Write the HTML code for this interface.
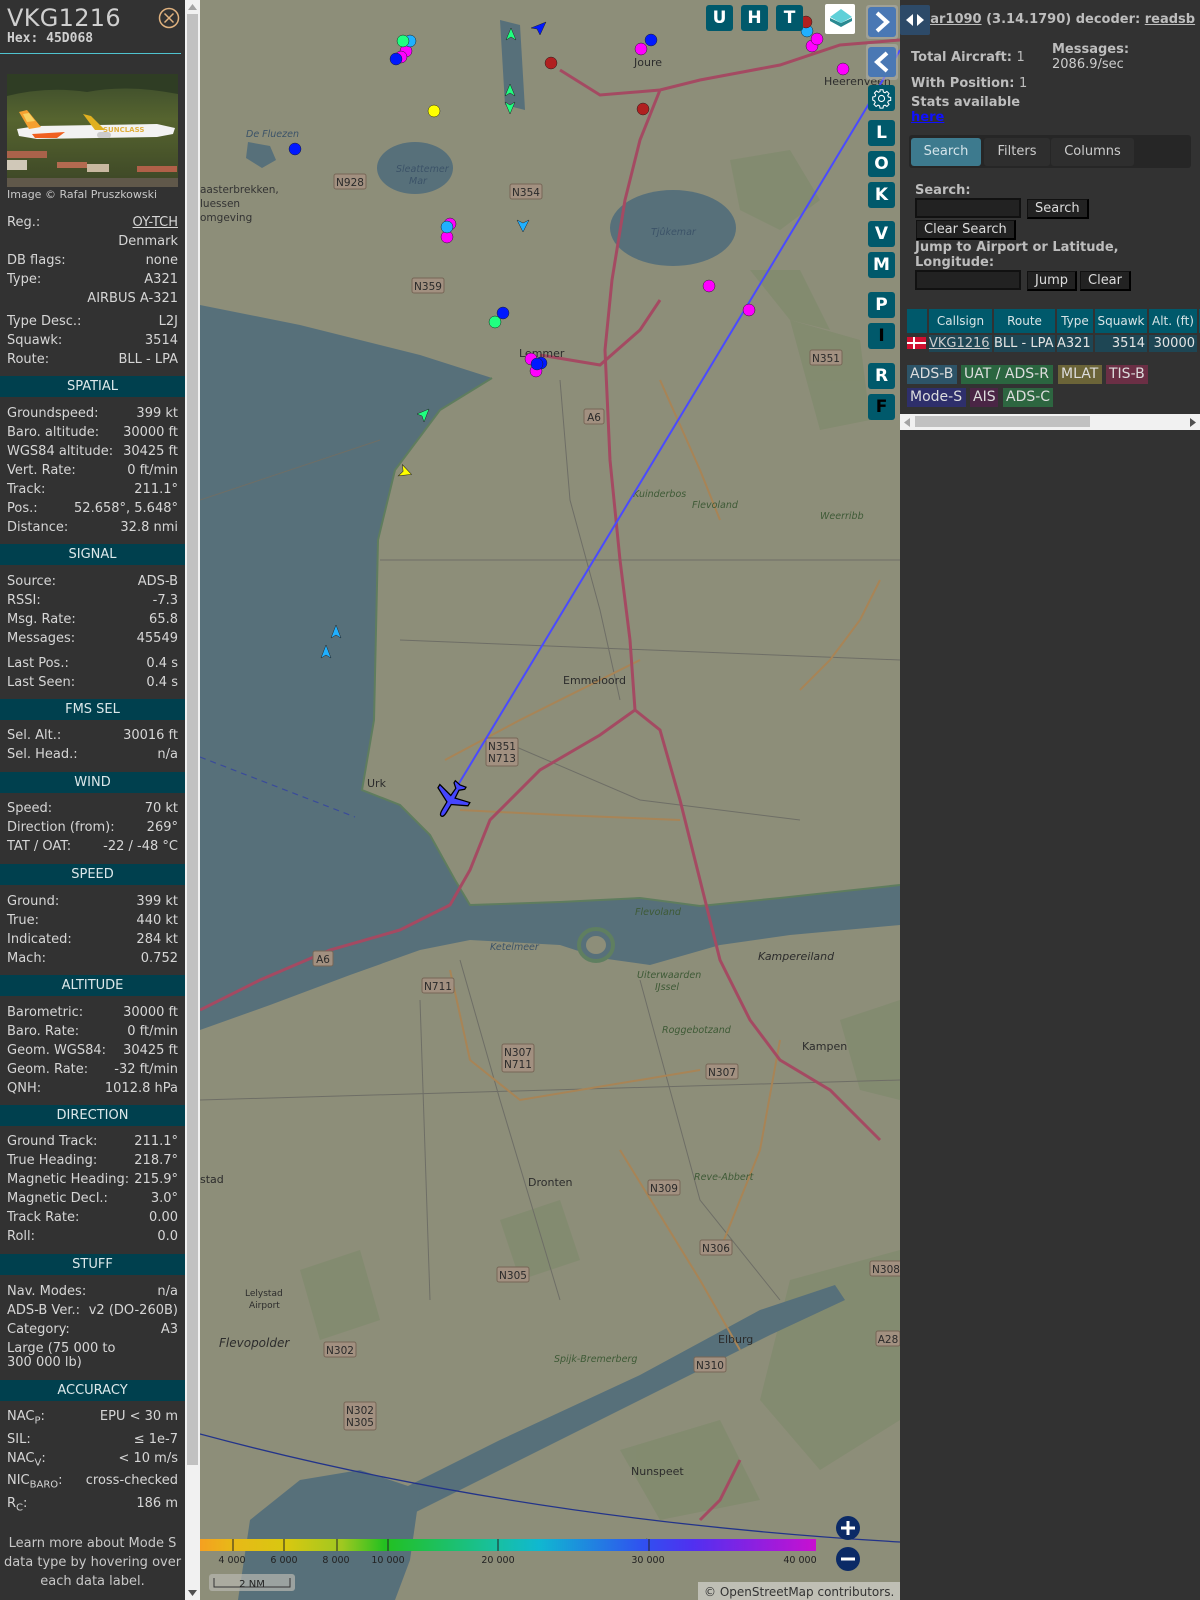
<!DOCTYPE html>
<html><head><meta charset="utf-8"><style>
*{margin:0;padding:0;box-sizing:border-box}
body{width:1200px;height:1600px;overflow:hidden;background:#323232;font-family:"DejaVu Sans","Liberation Sans",sans-serif;color:#d8d8d8;position:relative}
.side{position:absolute;left:0;top:0;width:185px;height:1600px;background:#323232}
.r{position:absolute;left:7px;width:171px;display:flex;justify-content:space-between;font-size:13px;line-height:16px;white-space:nowrap;color:#d6d6d6}
.h{position:absolute;left:0;width:185px;height:21px;background:#00404e;font-size:13px;line-height:21px;text-align:center;color:#dde8ea}
.sb{position:absolute;left:185px;top:0;width:15px;height:1600px;background:#f1f1f1}
.map{position:absolute;left:200px;top:0;width:700px;height:1600px;overflow:hidden}
.btn{position:absolute;width:27px;height:26px;background:#00596b;border-radius:3px;color:#fff;font:bold 17px "DejaVu Sans",sans-serif;text-align:center;line-height:26px}
.panel{position:absolute;left:900px;top:0;width:300px;height:1600px;background:#323232;font-size:13px}
.b{font-weight:bold;color:#bdbdbd}
.pbtn{position:absolute;background:#222;border:1px solid #111;border-bottom:2px solid #000;border-right:2px solid #000;color:#ddd;font-size:13px;line-height:17px;padding:0 7px}
.inp{position:absolute;background:#222;border:2px solid #111;width:106px;height:20px}
.th{position:absolute;top:309px;height:24px;background:#00596b;color:#d8e4e6;font-size:12px;line-height:24px;text-align:center;white-space:nowrap}
.td{position:absolute;top:335px;height:17px;background:#1e4654;color:#e4e4e4;font-size:13px;line-height:17px;white-space:nowrap}
.bd{position:absolute;height:19px;font-size:14px;line-height:19px;padding:0 3px;color:#ddd;white-space:nowrap}
</style></head><body>

<div class="side">
 <div style="position:absolute;left:7px;top:4px;font-size:24px;color:#cfcfcf;letter-spacing:.3px">VKG1216</div>
 <svg style="position:absolute;left:158px;top:7px" width="22" height="22"><circle cx="11" cy="11" r="9.5" fill="none" stroke="#e0b27f" stroke-width="1.5"/><path d="M6.5 6.5L15.5 15.5M15.5 6.5L6.5 15.5" stroke="#e0b27f" stroke-width="1.5"/></svg>
 <div style="position:absolute;left:7px;top:31px;font:bold 13px 'DejaVu Sans Mono','Liberation Mono',monospace;color:#cfcfcf">Hex: 45D068</div>
 <div style="position:absolute;left:0;top:53px;width:181px;height:1px;background:#4fc3d0"></div>
 <svg style="position:absolute;left:7px;top:74px" width="171" height="113">
  <defs><linearGradient id="hill" x1="0" y1="0" x2="0" y2="1"><stop offset="0" stop-color="#3a4a2c"/><stop offset=".4" stop-color="#56642f"/><stop offset="1" stop-color="#3c4626"/></linearGradient></defs>
  <rect width="171" height="113" fill="url(#hill)"/>
  <path d="M0 0L171 0L171 20Q120 10 80 18Q40 12 0 22Z" fill="#2f3d24"/>
  <rect x="0" y="77" width="40" height="7" fill="#a9624a"/><rect x="50" y="88" width="30" height="6" fill="#b36a50"/><rect x="130" y="92" width="40" height="6" fill="#b06048"/><rect x="80" y="90" width="22" height="8" fill="#c8b8a0"/>
  <rect x="0" y="86" width="20" height="10" fill="#d0c8b8"/>
  <rect y="104" width="171" height="9" fill="#60584a"/>
  <path d="M10 55L30 52L150 50L168 54L166 60L150 63L30 65L12 62Z" fill="#f2f2f2"/>
  <path d="M12 38L20 36L34 53L22 55Z" fill="#f5a030"/><path d="M16 40L22 39L28 47L20 48Z" fill="#f8d060"/>
  <path d="M25 60L58 58L50 64L28 64Z" fill="#f06020"/>
  <path d="M76 40L84 42L98 56L88 56Z" fill="#e0b020"/>
  <rect x="90" y="58" width="14" height="6" rx="3" fill="#ccc"/>
  <text x="96" y="58" font-size="7" fill="#e0b040" font-weight="bold">SUNCLASS</text>
 </svg>
 <div style="position:absolute;left:7px;top:188px;font-size:11px;color:#c8c8c8">Image © Rafal Pruszkowski</div>

 <div class="r" style="top:215px"><span>Reg.:</span><span style="text-decoration:underline">OY-TCH</span></div>
 <div class="r" style="top:234px"><span></span><span>Denmark</span></div>
 <div class="r" style="top:253px"><span>DB flags:</span><span>none</span></div>
 <div class="r" style="top:272px"><span>Type:</span><span>A321</span></div>
 <div class="r" style="top:291px"><span></span><span>AIRBUS A-321</span></div>
 <div class="r" style="top:314px"><span>Type Desc.:</span><span>L2J</span></div>
 <div class="r" style="top:333px"><span>Squawk:</span><span>3514</span></div>
 <div class="r" style="top:352px"><span>Route:</span><span>BLL - LPA</span></div>

 <div class="h" style="top:376px">SPATIAL</div>
 <div class="r" style="top:406px"><span>Groundspeed:</span><span>399 kt</span></div>
 <div class="r" style="top:425px"><span>Baro. altitude:</span><span>30000 ft</span></div>
 <div class="r" style="top:444px"><span>WGS84 altitude:</span><span>30425 ft</span></div>
 <div class="r" style="top:463px"><span>Vert. Rate:</span><span>0 ft/min</span></div>
 <div class="r" style="top:482px"><span>Track:</span><span>211.1°</span></div>
 <div class="r" style="top:501px"><span>Pos.:</span><span>52.658°, 5.648°</span></div>
 <div class="r" style="top:520px"><span>Distance:</span><span>32.8 nmi</span></div>

 <div class="h" style="top:544px">SIGNAL</div>
 <div class="r" style="top:574px"><span>Source:</span><span>ADS-B</span></div>
 <div class="r" style="top:593px"><span>RSSI:</span><span>-7.3</span></div>
 <div class="r" style="top:612px"><span>Msg. Rate:</span><span>65.8</span></div>
 <div class="r" style="top:631px"><span>Messages:</span><span>45549</span></div>
 <div class="r" style="top:656px"><span>Last Pos.:</span><span>0.4 s</span></div>
 <div class="r" style="top:675px"><span>Last Seen:</span><span>0.4 s</span></div>

 <div class="h" style="top:699px">FMS SEL</div>
 <div class="r" style="top:728px"><span>Sel. Alt.:</span><span>30016 ft</span></div>
 <div class="r" style="top:747px"><span>Sel. Head.:</span><span>n/a</span></div>

 <div class="h" style="top:772px">WIND</div>
 <div class="r" style="top:801px"><span>Speed:</span><span>70 kt</span></div>
 <div class="r" style="top:820px"><span>Direction (from):</span><span>269°</span></div>
 <div class="r" style="top:839px"><span>TAT / OAT:</span><span>-22 / -48 °C</span></div>

 <div class="h" style="top:864px">SPEED</div>
 <div class="r" style="top:894px"><span>Ground:</span><span>399 kt</span></div>
 <div class="r" style="top:913px"><span>True:</span><span>440 kt</span></div>
 <div class="r" style="top:932px"><span>Indicated:</span><span>284 kt</span></div>
 <div class="r" style="top:951px"><span>Mach:</span><span>0.752</span></div>

 <div class="h" style="top:975px">ALTITUDE</div>
 <div class="r" style="top:1005px"><span>Barometric:</span><span>30000 ft</span></div>
 <div class="r" style="top:1024px"><span>Baro. Rate:</span><span>0 ft/min</span></div>
 <div class="r" style="top:1043px"><span>Geom. WGS84:</span><span>30425 ft</span></div>
 <div class="r" style="top:1062px"><span>Geom. Rate:</span><span>-32 ft/min</span></div>
 <div class="r" style="top:1081px"><span>QNH:</span><span>1012.8 hPa</span></div>

 <div class="h" style="top:1105px">DIRECTION</div>
 <div class="r" style="top:1134px"><span>Ground Track:</span><span>211.1°</span></div>
 <div class="r" style="top:1153px"><span>True Heading:</span><span>218.7°</span></div>
 <div class="r" style="top:1172px"><span>Magnetic Heading:</span><span>215.9°</span></div>
 <div class="r" style="top:1191px"><span>Magnetic Decl.:</span><span>3.0°</span></div>
 <div class="r" style="top:1210px"><span>Track Rate:</span><span>0.00</span></div>
 <div class="r" style="top:1229px"><span>Roll:</span><span>0.0</span></div>

 <div class="h" style="top:1254px">STUFF</div>
 <div class="r" style="top:1284px"><span>Nav. Modes:</span><span>n/a</span></div>
 <div class="r" style="top:1303px"><span>ADS-B Ver.:</span><span>v2 (DO-260B)</span></div>
 <div class="r" style="top:1322px"><span>Category:</span><span>A3</span></div>
 <div class="r" style="top:1341px"><span>Large (75 000 to</span><span></span></div>
 <div class="r" style="top:1355px"><span>300 000 lb)</span><span></span></div>

 <div class="h" style="top:1380px">ACCURACY</div>
 <div class="r" style="top:1409px"><span>NAC<sub style="font-size:10px">P</sub>:</span><span>EPU &lt; 30 m</span></div>
 <div class="r" style="top:1432px"><span>SIL:</span><span>≤ 1e-7</span></div>
 <div class="r" style="top:1451px"><span>NAC<sub style="font-size:10px">V</sub>:</span><span>&lt; 10 m/s</span></div>
 <div class="r" style="top:1473px"><span>NIC<sub style="font-size:10px">BARO</sub>:</span><span>cross-checked</span></div>
 <div class="r" style="top:1496px"><span>R<sub style="font-size:10px">C</sub>:</span><span>186 m</span></div>
 <div style="position:absolute;left:0;top:1534px;width:185px;text-align:center;font-size:13px;line-height:19px;color:#c8c8c8">Learn more about Mode S data type by hovering over each data label.</div>
</div>

<div class="sb">
 <div style="position:absolute;left:2px;top:14px;width:11px;height:1451px;background:#c1c1c1"></div>
 <svg style="position:absolute;left:3px;top:4px" width="9" height="6"><path d="M0 6L4.5 0L9 6Z" fill="#a3a3a3"/></svg>
 <svg style="position:absolute;left:3px;top:1590px" width="9" height="6"><path d="M0 0L4.5 6L9 0Z" fill="#505050"/></svg>
</div>

<div class="map">
<svg width="700" height="1600" viewBox="200 0 700 1600" style="position:absolute;left:0;top:0;font-family:'DejaVu Sans',sans-serif">
 <rect x="200" y="0" width="700" height="1600" fill="#8d8e79"/>
 <g fill="#7f8a6c" opacity=".7">
  <path d="M730 160L790 150L820 200L780 230L740 210Z"/><path d="M750 270L800 270L830 330L790 320Z"/>
  <path d="M790 320L860 340L870 420L820 430Z"/><path d="M790 1280L900 1250L900 1420L820 1470L760 1400Z"/>
  <path d="M500 1220L560 1200L580 1260L520 1280Z"/><path d="M300 1270L360 1250L380 1320L320 1340Z"/>
  <path d="M620 1450L720 1420L760 1500L660 1520Z"/><path d="M840 1020L900 1000L900 1100L860 1090Z"/>
 </g>
 <g fill="#57707a">
  <path d="M200 305L300 325L420 355L492 378L440 410L395 470L378 540L374 720L362 790L400 805L430 835L455 880L470 905L560 902L640 898L700 906L780 898L900 885L900 925L790 935L720 945L650 965L600 958L560 945L470 940L420 950L350 975L270 1005L200 1030Z"/>
  <path d="M390 1495L500 1440L640 1375L760 1310L835 1285L845 1300L770 1335L650 1395L520 1460L410 1515Z"/>
  <path d="M238 1600L250 1520L300 1480L360 1470L420 1490L410 1560L395 1600Z"/>
  <ellipse cx="415" cy="168" rx="38" ry="26"/>
  <ellipse cx="673" cy="228" rx="63" ry="38"/>
  <path d="M248 142L270 146L276 160L262 168L246 158Z"/>
  <path d="M500 20L520 25L525 110L505 105Z"/>
  <ellipse cx="596" cy="945" rx="17" ry="16"/>
 </g>
 <ellipse cx="596" cy="945" rx="17" ry="16" fill="none" stroke="#5f7f60" stroke-width="4"/>
 <ellipse cx="596" cy="945" rx="10" ry="9" fill="#8d8e79"/>
 <path d="M492 378L440 410L395 470L378 540L374 720L362 790L400 805L430 835L455 880L470 905L560 902L640 898L700 906L780 898L900 885" fill="none" stroke="#5f7d5e" stroke-width="2"/>
 <g fill="none" stroke="#6e6e66" stroke-width="1">
  <path d="M560 380L570 500L600 610L620 700"/><path d="M380 560L620 560L900 560"/><path d="M400 640L900 660"/>
  <path d="M500 740L640 800L800 820"/><path d="M460 960L500 1100L560 1300"/><path d="M200 1100L900 1080"/>
  <path d="M640 980L700 1200L780 1300"/><path d="M420 1000L430 1300"/><path d="M200 500L380 440"/>
 </g>
 <g fill="none" stroke="#a88456" stroke-width="2">
  <path d="M445 760L520 720L600 680L640 660"/><path d="M460 810L560 815L680 820"/><path d="M660 380L700 470L720 520"/>
  <path d="M880 580L860 620L830 660L800 690"/><path d="M450 970L470 1060L520 1100L700 1070"/>
  <path d="M620 1150L700 1280L740 1350"/><path d="M780 1040L760 1150L720 1250"/>
 </g>
 <g fill="none" stroke="#a44a62" stroke-width="3">
  <path d="M560 70L600 95L660 90L700 80L780 65L840 45L900 40"/>
  <path d="M660 90L640 140L625 200L612 280L605 350L610 460L620 560L630 640L635 710L600 735L540 770L490 820L470 870L450 905L400 930L330 950L260 980L200 1010"/>
  <path d="M540 355L600 365L640 330L660 300"/>
  <path d="M635 710L660 730L680 800L700 880L720 960L750 1020L780 1060L830 1090L880 1140"/>
  <path d="M700 1520L720 1500L740 1460"/>
 </g>
 <path d="M200 1434Q520 1520 900 1542" fill="none" stroke="#22338a" stroke-width="1.3"/>
 <path d="M200 757L355 817" fill="none" stroke="#3a4b9a" stroke-width="1.2" stroke-dasharray="6 5"/>
 <g font-size="10.5" fill="#2a2a2a" text-anchor="middle">
  <g fill="#a29080" stroke="#776656" stroke-width="1">
   <rect x="334" y="174" width="32" height="15" rx="2"/><rect x="510" y="184" width="32" height="15" rx="2"/>
   <rect x="412" y="278" width="32" height="15" rx="2"/><rect x="810" y="350" width="32" height="15" rx="2"/>
   <rect x="584" y="409" width="20" height="15" rx="2"/><rect x="486" y="738" width="32" height="28" rx="2"/>
   <rect x="313" y="951" width="20" height="15" rx="2"/><rect x="422" y="978" width="32" height="15" rx="2"/>
   <rect x="502" y="1044" width="32" height="28" rx="2"/><rect x="706" y="1064" width="32" height="15" rx="2"/>
   <rect x="648" y="1180" width="32" height="15" rx="2"/><rect x="700" y="1240" width="32" height="15" rx="2"/>
   <rect x="497" y="1267" width="32" height="15" rx="2"/><rect x="870" y="1261" width="32" height="15" rx="2"/>
   <rect x="324" y="1342" width="32" height="15" rx="2"/><rect x="694" y="1357" width="32" height="15" rx="2"/>
   <rect x="344" y="1402" width="32" height="28" rx="2"/><rect x="876" y="1331" width="24" height="15" rx="2"/>
  </g>
  <text x="350" y="186">N928</text><text x="526" y="196">N354</text><text x="428" y="290">N359</text>
  <text x="826" y="362">N351</text><text x="594" y="421">A6</text><text x="502" y="750">N351</text><text x="502" y="762">N713</text>
  <text x="323" y="963">A6</text><text x="438" y="990">N711</text><text x="518" y="1056">N307</text><text x="518" y="1068">N711</text>
  <text x="722" y="1076">N307</text><text x="664" y="1192">N309</text><text x="716" y="1252">N306</text>
  <text x="513" y="1279">N305</text><text x="886" y="1273">N308</text><text x="340" y="1354">N302</text>
  <text x="710" y="1369">N310</text><text x="360" y="1414">N302</text><text x="360" y="1426">N305</text><text x="888" y="1343">A28</text>
 </g>
 <g font-size="11" fill="#2c2c2c">
  <text x="634" y="66">Joure</text><text x="824" y="85">Heerenveen</text><text x="519" y="357">Lemmer</text>
  <text x="563" y="684">Emmeloord</text><text x="367" y="787">Urk</text><text x="528" y="1186">Dronten</text>
  <text x="802" y="1050">Kampen</text><text x="718" y="1343">Elburg</text><text x="631" y="1475">Nunspeet</text>
  <text x="200" y="1183">stad</text><text x="219" y="1347" font-style="italic" font-size="12">Flevopolder</text>
  <text x="758" y="960" font-style="italic">Kampereiland</text>
  <text x="245" y="1296" font-size="9">Lelystad</text><text x="249" y="1308" font-size="9">Airport</text>
 </g>
 <g font-size="9.5" fill="#3c5368" font-style="italic">
  <text x="246" y="137">De Fluezen</text><text x="396" y="172">Sleattemer</text><text x="409" y="184">Mar</text>
  <text x="651" y="235">Tjûkemar</text><text x="490" y="950">Ketelmeer</text><text x="200" y="193" fill="#333" font-style="normal" font-size="10.5">aasterbrekken,</text>
  <text x="200" y="207" fill="#333" font-style="normal" font-size="10.5">luessen</text><text x="200" y="221" fill="#333" font-style="normal" font-size="10.5">omgeving</text>
 </g>
 <g font-size="9.5" fill="#3e5a36" font-style="italic">
  <text x="633" y="497">Kuinderbos</text><text x="692" y="508">Flevoland</text><text x="820" y="519">Weerribb</text>
  <text x="637" y="978">Uiterwaarden</text><text x="655" y="990">IJssel</text><text x="662" y="1033">Roggebotzand</text>
  <text x="694" y="1180">Reve-Abbert</text><text x="554" y="1362">Spijk-Bremerberg</text><text x="610" y="1546">Leuvenhorst</text>
  <text x="635" y="915">Flevoland</text>
 </g>
 <path d="M455 790L873 97L900 50" stroke="#4a4aff" stroke-width="2" fill="none"/>
 <g stroke="#222" stroke-width=".5">
  <g fill="#ff00ff">
   <circle cx="406" cy="51" r="6"/><circle cx="401" cy="57" r="6"/><circle cx="450" cy="224" r="6"/><circle cx="447" cy="237" r="6"/>
   <circle cx="641" cy="49" r="6"/><circle cx="709" cy="286" r="6"/><circle cx="749" cy="310" r="6"/><circle cx="536" cy="371" r="6"/>
   <circle cx="812" cy="46" r="6"/><circle cx="817" cy="39" r="6"/><circle cx="843" cy="69" r="6"/><circle cx="531" cy="359" r="6"/>
  </g>
  <g fill="#0018ff"><circle cx="396" cy="59" r="6"/><circle cx="651" cy="40" r="6"/><circle cx="295" cy="149" r="6"/><circle cx="503" cy="313" r="6"/><circle cx="541" cy="363" r="6"/><circle cx="537" cy="364" r="6"/></g>
  <g fill="#20b0ff"><circle cx="410" cy="41" r="6"/><circle cx="447" cy="227" r="6"/><circle cx="807" cy="31" r="6"/></g>
  <g fill="#20ff80"><circle cx="403" cy="41" r="6"/><circle cx="495" cy="322" r="6"/></g>
  <g fill="#b02020"><circle cx="551" cy="63" r="6"/><circle cx="643" cy="109" r="6"/><circle cx="806" cy="22" r="6"/></g>
  <circle cx="434" cy="111" r="6" fill="#ffff00"/>
  <g fill="#20ff80"><path d="M511 28L516 40L511 37L506 40Z"/><path d="M510 84L515 96L510 93L505 96Z"/><path d="M510 114L515 102L510 105L505 102Z"/><path d="M429 409L424 422L422 416L417 414Z"/></g>
  <g fill="#0018ff"><path d="M546 22L540 35L537 29L531 28Z"/></g>
  <g fill="#20b0ff"><path d="M523 232L529 220L523 223L517 220Z"/><path d="M336 625L341 638L336 635L331 638Z"/><path d="M326 645L331 658L326 655L321 658Z"/></g>
  <path d="M412 472L400 478L403 472L400 466Z" fill="#ffff00" transform="rotate(20 405 472)"/>
 </g>
 <g transform="translate(451 800) rotate(211) scale(1.25)" fill="#4545ff" stroke="#000" stroke-width="1">
  <path d="M0 -15C1.5 -15 2 -13 2 -10L2 -3L14 3L14 6L2 3L1.5 10L5 13L5 15L0 14L-5 15L-5 13L-1.5 10L-2 3L-14 6L-14 3L-2 -3L-2 -10C-2 -13 -1.5 -15 0 -15Z"/>
 </g>
 <defs><linearGradient id="alt" x1="200" x2="816" gradientUnits="userSpaceOnUse">
  <stop offset="0" stop-color="#f5a020"/><stop offset=".05" stop-color="#e8b818"/><stop offset=".14" stop-color="#d8c810"/>
  <stop offset=".23" stop-color="#a0c820"/><stop offset=".3" stop-color="#22c020"/><stop offset=".48" stop-color="#18c0a0"/>
  <stop offset=".55" stop-color="#10b8d0"/><stop offset=".72" stop-color="#3050f0"/><stop offset=".8" stop-color="#5030f0"/><stop offset="1" stop-color="#c810d0"/>
 </linearGradient></defs>
 <rect x="200" y="1539" width="616" height="12" fill="url(#alt)"/>
 <g stroke="#222" stroke-width="1"><path d="M233 1539v12M284 1539v12M337 1539v12M388 1539v12M498 1539v12M649 1539v12"/></g>
 <g font-size="9.5" fill="#222" text-anchor="middle">
  <text x="232" y="1563">4 000</text><text x="284" y="1563">6 000</text><text x="336" y="1563">8 000</text><text x="388" y="1563">10 000</text>
  <text x="498" y="1563">20 000</text><text x="648" y="1563">30 000</text><text x="800" y="1563">40 000</text>
 </g>
 <rect x="209" y="1574" width="86" height="17" rx="3" fill="#b8b8b0" opacity=".7"/>
 <path d="M214 1578v9h76v-9" fill="none" stroke="#333" stroke-width="1"/>
 <text x="252" y="1587" font-size="10" fill="#222" text-anchor="middle">2 NM</text>
 <rect x="698" y="1582" width="202" height="18" fill="#c8c8c0" opacity=".85"/>
 <text x="704" y="1596" font-size="12" fill="#333">© OpenStreetMap contributors.</text>
 <circle cx="848" cy="1528" r="12" fill="#0b2a66"/><path d="M841 1528h14M848 1521v14" stroke="#fff" stroke-width="3"/>
 <circle cx="848" cy="1559" r="12" fill="#0b2a66"/><path d="M841 1559h14" stroke="#fff" stroke-width="3"/>
</svg>
 <div class="btn" style="left:506px;top:5px">U</div>
 <div class="btn" style="left:541px;top:5px">H</div>
 <div class="btn" style="left:576px;top:5px">T</div>
 <div style="position:absolute;left:625px;top:4px;width:30px;height:30px;background:#fff;border-radius:2px"></div>
 <svg style="position:absolute;left:628px;top:6px" width="26" height="26"><path d="M13 17L24 12L24 15L13 21L2 15L2 12Z" fill="#2a8a92"/><path d="M13 3L24 11L13 17L2 11Z" fill="#5fd0d8"/></svg>
 <div style="position:absolute;left:666px;top:5px;width:32px;height:34px;background:rgba(180,180,180,.5);border-radius:3px"></div>
 <div class="btn" style="left:668px;top:7px;background:#4a78b4;height:30px;width:28px"></div>
 <svg style="position:absolute;left:672px;top:10px" width="20" height="24"><path d="M5 3L15 12L5 21" fill="none" stroke="#fff" stroke-width="4"/></svg>
 <div style="position:absolute;left:666px;top:44px;width:32px;height:36px;background:rgba(180,180,180,.5);border-radius:3px"></div>
 <div class="btn" style="left:668px;top:47px;background:#4a78b4;height:30px;width:28px"></div>
 <svg style="position:absolute;left:672px;top:50px" width="20" height="24"><path d="M15 3L5 12L15 21" fill="none" stroke="#fff" stroke-width="4"/></svg>
 <div class="btn" style="left:668px;top:85px"></div>
 <svg style="position:absolute;left:671px;top:88px" width="21" height="21" viewBox="0 0 24 24"><path d="M12 8.5a3.5 3.5 0 1 0 0 7a3.5 3.5 0 1 0 0-7zM10.3 2h3.4l.5 2.6 1.8.8 2.2-1.5 2.4 2.4-1.5 2.2.8 1.8 2.6.5v3.4l-2.6.5-.8 1.8 1.5 2.2-2.4 2.4-2.2-1.5-1.8.8-.5 2.6h-3.4l-.5-2.6-1.8-.8-2.2 1.5-2.4-2.4 1.5-2.2-.8-1.8L2 13.7v-3.4l2.6-.5.8-1.8-1.5-2.2 2.4-2.4 2.2 1.5 1.8-.8z" fill="none" stroke="#fff" stroke-width="1.2"/></svg>
 <div class="btn" style="left:668px;top:120px">L</div>
 <div class="btn" style="left:668px;top:151px">O</div>
 <div class="btn" style="left:668px;top:182px">K</div>
 <div class="btn" style="left:668px;top:221px">V</div>
 <div class="btn" style="left:668px;top:252px">M</div>
 <div class="btn" style="left:668px;top:292px">P</div>
 <div class="btn" style="left:668px;top:323px;color:#000">I</div>
 <div class="btn" style="left:668px;top:363px">R</div>
 <div class="btn" style="left:668px;top:394px;color:#000">F</div>
</div>

<div class="panel">
 <div style="position:absolute;left:24px;top:12px;white-space:nowrap" class="b"><u>tar1090</u> (3.14.1790) decoder: <u>readsb</u></div>
 <div style="position:absolute;left:0;top:5px;width:30px;height:30px;background:#2d4a68;border-radius:2px"></div>
 <svg style="position:absolute;left:4px;top:12px" width="22" height="16"><path d="M9 2L2 8L9 14Z" fill="#fff"/><path d="M13 2L20 8L13 14Z" fill="#fff"/></svg>
 <div class="b" style="position:absolute;left:11px;top:50px">Total Aircraft: <span style="font-weight:normal">1</span></div>
 <div class="b" style="position:absolute;left:152px;top:42px">Messages:</div>
 <div style="position:absolute;left:152px;top:57px;color:#ccc">2086.9/sec</div>
 <div class="b" style="position:absolute;left:11px;top:76px">With Position: <span style="font-weight:normal">1</span></div>
 <div class="b" style="position:absolute;left:11px;top:95px">Stats available</div>
 <div style="position:absolute;left:11px;top:110px;color:#1010ff;font-weight:bold;text-decoration:underline">here</div>

 <div style="position:absolute;left:9px;top:135px;width:282px;height:33px;background:#262626;border-radius:3px"></div>
 <div style="position:absolute;left:11px;top:138px;width:70px;height:28px;background:#3d7a8e;border-radius:3px;color:#d4e4ea;text-align:center;line-height:28px">Search</div>
 <div style="position:absolute;left:84px;top:138px;width:66px;height:28px;background:#2e2e2e;border-radius:3px;color:#ccc;text-align:center;line-height:28px">Filters</div>
 <div style="position:absolute;left:151px;top:138px;width:83px;height:28px;background:#2e2e2e;border-radius:3px;color:#ccc;text-align:center;line-height:28px">Columns</div>

 <div class="b" style="position:absolute;left:15px;top:183px">Search:</div>
 <div class="inp" style="left:15px;top:198px"></div>
 <div class="pbtn" style="left:127px;top:199px">Search</div>
 <div class="pbtn" style="left:16px;top:220px">Clear Search</div>
 <div class="b" style="position:absolute;left:15px;top:240px;line-height:15px">Jump to Airport or Latitude,<br>Longitude:</div>
 <div class="inp" style="left:15px;top:270px"></div>
 <div class="pbtn" style="left:127px;top:271px">Jump</div>
 <div class="pbtn" style="left:180px;top:271px">Clear</div>

 <div class="th" style="left:7px;width:20px"></div>
 <div class="th" style="left:29px;width:63px">Callsign</div>
 <div class="th" style="left:94px;width:61px">Route</div>
 <div class="th" style="left:157px;width:36px">Type</div>
 <div class="th" style="left:195px;width:52px">Squawk</div>
 <div class="th" style="left:249px;width:48px">Alt. (ft)</div>
 <div class="th" style="left:299px;width:1px"></div>
 <div style="position:absolute;left:7px;top:337px;width:19px;height:12px;background:#d01030"></div>
 <div style="position:absolute;left:7px;top:342px;width:19px;height:2px;background:#fff"></div>
 <div style="position:absolute;left:13px;top:337px;width:2px;height:12px;background:#fff"></div>
 <div class="td" style="left:29px;width:63px;text-decoration:underline;color:#ccc">VKG1216</div>
 <div class="td" style="left:94px;width:61px">BLL - LPA</div>
 <div class="td" style="left:157px;width:36px">A321</div>
 <div class="td" style="left:195px;width:52px;text-align:right;padding-right:2px">3514</div>
 <div class="td" style="left:249px;width:48px;text-align:right;padding-right:2px">30000</div>

 <div class="bd" style="left:7px;top:365px;width:50px;background:#2d5468">ADS-B</div>
 <div class="bd" style="left:61px;top:365px;width:92px;background:#2b6640">UAT / ADS-R</div>
 <div class="bd" style="left:158px;top:365px;width:44px;background:#6b6438">MLAT</div>
 <div class="bd" style="left:206px;top:365px;width:42px;background:#6b2f45">TIS-B</div>
 <div class="bd" style="left:7px;top:388px;width:59px;background:#2e2f6b">Mode-S</div>
 <div class="bd" style="left:70px;top:388px;width:28px;background:#4a2545">AIS</div>
 <div class="bd" style="left:103px;top:388px;width:50px;background:#2d6640">ADS-C</div>

 <div style="position:absolute;left:0;top:414px;width:300px;height:16px;background:#f1f1f1"></div>
 <div style="position:absolute;left:15px;top:416px;width:175px;height:11px;background:#c1c1c1"></div>
 <svg style="position:absolute;left:4px;top:418px" width="6" height="9"><path d="M6 0L0 4.5L6 9Z" fill="#a3a3a3"/></svg>
 <svg style="position:absolute;left:290px;top:418px" width="6" height="9"><path d="M0 0L6 4.5L0 9Z" fill="#505050"/></svg>
</div>
</body></html>
